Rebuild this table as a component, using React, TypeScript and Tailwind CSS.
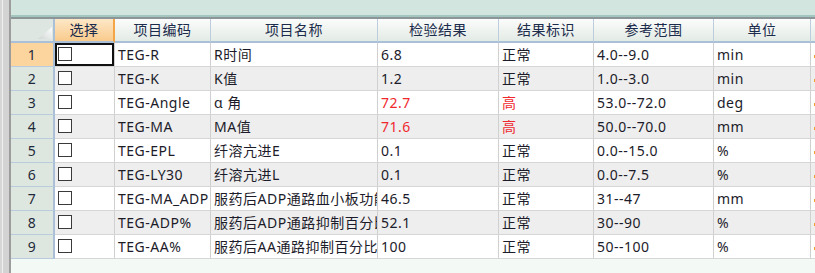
import React from "react";

const rows: string[][] = [
  ["TEG-R", "R时间", "6.8", "正常", "4.0--9.0", "min"],
  ["TEG-K", "K值", "1.2", "正常", "1.0--3.0", "min"],
  ["TEG-Angle", "α 角", "72.7", "高", "53.0--72.0", "deg"],
  ["TEG-MA", "MA值", "71.6", "高", "50.0--70.0", "mm"],
  ["TEG-EPL", "纤溶亢进E", "0.1", "正常", "0.0--15.0", "%"],
  ["TEG-LY30", "纤溶亢进L", "0.1", "正常", "0.0--7.5", "%"],
  ["TEG-MA_ADP", "服药后ADP通路血小板功能", "46.5", "正常", "31--47", "mm"],
  ["TEG-ADP%", "服药后ADP通路抑制百分比", "52.1", "正常", "30--90", "%"],
  ["TEG-AA%", "服药后AA通路抑制百分比", "100", "正常", "50--100", "%"],
];

const headers = ["项目编码", "项目名称", "检验结果", "结果标识", "参考范围", "单位"];

export default function App() {
  return (
    <div className="w-[815px] h-[273px] overflow-hidden flex font-['Noto_Sans','Noto_Sans_CJK_SC',sans-serif] text-[14px] tracking-[0.5px] leading-none">
      {/* left strip */}
      <div className="w-[2px] h-full bg-[#d6d6d6]" />
      <div className="w-[1px] h-full bg-[#efefef]" />
      <div className="w-[6px] h-full bg-[#d3d3d3]" />
      <div className="w-[2px] h-full bg-[#9d9d9d]" />
      <div className="flex-1 min-w-0 flex flex-col">
        <div className="h-[15px] bg-[#d3e5df]" />
        <div className="h-[2px] bg-[#a3c6be]" />
        <div className="h-[2px] bg-[#8c9598]" />
        {/* header */}
        <div className="grid grid-cols-[44px_60px_96px_167px_121px_95px_120px_97px_1fr] h-[24px]">
          <div className="relative bg-[#dde6e0] border-r-2 border-b-2 border-[#a9c0d8]">
            <svg className="absolute right-[1px] bottom-[2px]" width="14" height="12" viewBox="0 0 14 12">
              <defs>
                <linearGradient id="tri" x1="0" y1="1" x2="1" y2="0">
                  <stop offset="0" stopColor="#cfd6d4" />
                  <stop offset="1" stopColor="#ffffff" />
                </linearGradient>
              </defs>
              <polygon points="0,12 14,0 14,12" fill="url(#tri)" />
            </svg>
          </div>
          <div className="flex items-center justify-center bg-gradient-to-b from-[#fde7c6] to-[#f9cb8c] border-r-2 border-r-[#f3a548] border-b-2 border-b-[#a9c0d8] text-[#1b2b4b]">
            选择
          </div>
          {headers.map((h, i) => (
            <div
              key={i}
              className="flex items-center justify-center bg-gradient-to-b from-[#fbfcfb] to-[#e3ebe5] border-r border-r-[#bccde0] border-b-2 border-b-[#a9c0d8] text-[#1b2b4b] overflow-hidden whitespace-nowrap"
            >
              {h}
            </div>
          ))}
          <div className="bg-gradient-to-b from-[#fbfcfb] to-[#e3ebe5] border-b-2 border-b-[#a9c0d8]" />
        </div>
        {/* rows */}
        {rows.map((r, i) => {
          const even = i % 2 === 1;
          const bg = even ? "bg-[#eeeeee]" : "bg-white";
          const red = r[3] === "高";
          const first = i === 0;
          return (
            <div key={i} className={`grid grid-cols-[44px_60px_96px_167px_121px_95px_120px_97px_1fr] h-[24px] ${bg}`}>
              <div
                className={`flex items-center justify-center border-r-2 border-r-[#a9c0d8] border-b border-b-[#b9cbdd] text-[#1e2a3a] ${
                  first ? "bg-[#fcd59e]" : "bg-[#dee7df]"
                }`}
              >
                {i + 1}
              </div>
              <div
                className={`flex items-center pl-[3px] pb-[1px] border-r border-r-[#d0d0d0] border-b border-b-[#d6d6d6] ${
                  first ? "shadow-[inset_0_0_0_2px_#111]" : ""
                }`}
              >
                <div className="w-[14px] h-[14px] border border-[#3a3a3a] bg-white" />
              </div>
              {r.map((c, j) => (
                <div
                  key={j}
                  className={`flex items-center pl-[3px] overflow-hidden whitespace-nowrap border-r border-r-[#d0d0d0] border-b border-b-[#d6d6d6] ${
                    red && (j === 2 || j === 3) ? "text-[#f0282d]" : "text-[#1c1b2a]"
                  }`}
                >
                  {c}
                </div>
              ))}
              <div className="flex items-center border-b border-b-[#d6d6d6]">
                <div className="ml-[3px] mt-[4px] w-[1px] h-[3px] bg-[#f0a030]" />
              </div>
            </div>
          );
        })}
        <div className="flex-1 bg-[#f3faf6]" />
      </div>
    </div>
  );
}
